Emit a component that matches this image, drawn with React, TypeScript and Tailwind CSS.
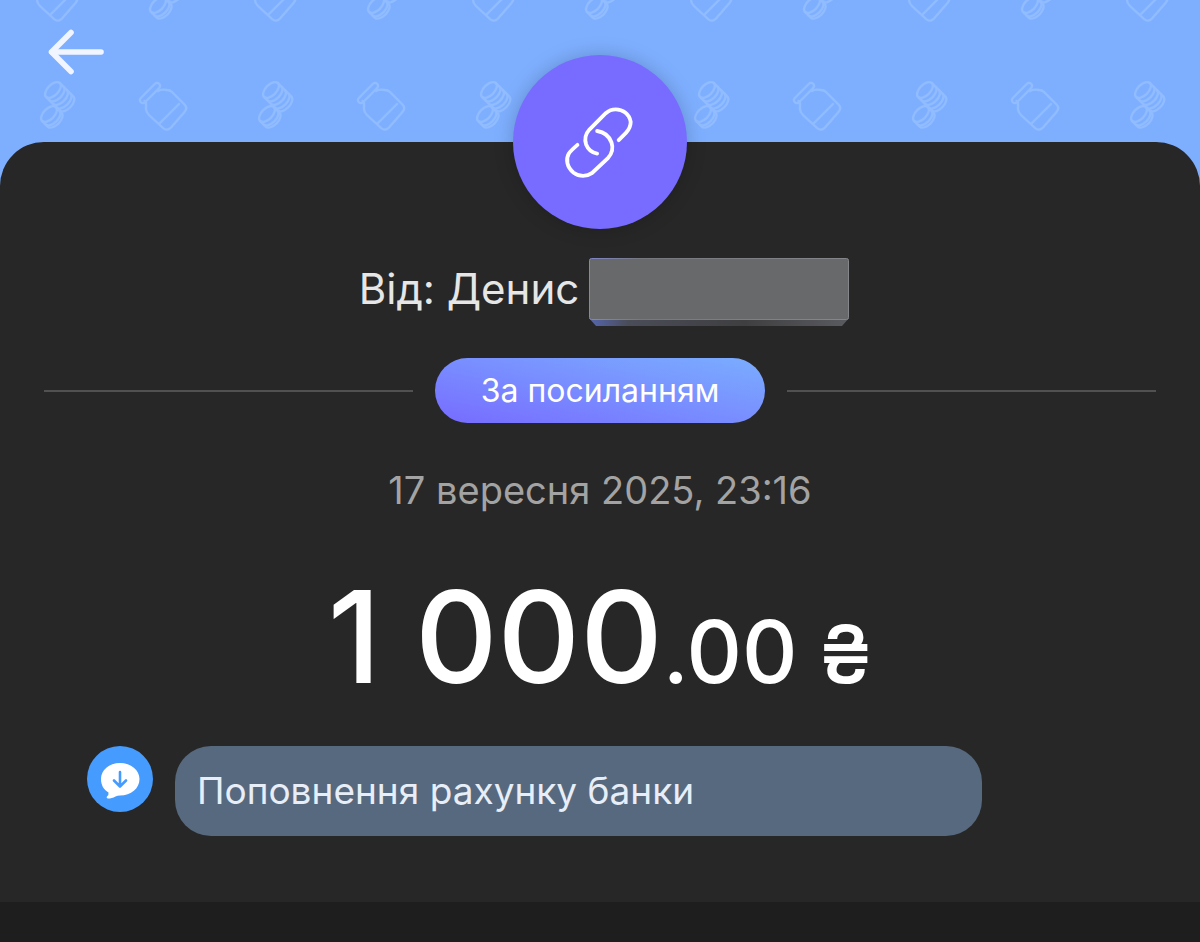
function CoinStack({ x, y, length }: { x: number; y: number; length: number }) {
  const ridges = [];
  for (let d = 5; d < length; d += 5) ridges.push(d);

  return (
    <g transform={`translate(${x} ${y}) rotate(45)`}>
      <ellipse cx="0" cy="0" rx="5.4" ry="9.8" />
      <path d={`M0 -9.8 H${length} A5.4 9.8 0 0 1 ${length} 9.8 H0`} />
      {ridges.map((d) => (
        <path key={d} d={`M${d} -9.8 A5.4 9.8 0 0 1 ${d} 9.8`} />
      ))}
    </g>
  );
}

function Coins() {
  return (
    <g>
      <CoinStack x={53} y={90} length={19} />
      <CoinStack x={49} y={114} length={8} />
    </g>
  );
}

function Jar() {
  return (
    <g>
      <rect x="-13" y="-3" width="26" height="6" rx="3" transform="translate(150 93) rotate(-45)" />
      <path d="M158 91 Q161 89 167 90 Q170 90 172 92 L184.500 104.500 Q188 108 184.500 112 L171 127.500 Q167 131.500 163 128 L149 115 Q146 112 146 109 V103 L144.500 101" />
      <path d="M179 104 L160 123" />
    </g>
  );
}

function HeaderPattern() {
  return (
    <svg className="absolute inset-x-0 top-0 h-[200px] w-full" aria-hidden="true">
      <defs>
        <pattern id="jars" width="218" height="218" patternUnits="userSpaceOnUse">
          <g fill="none" stroke="#91bcff" strokeWidth="2.300" strokeLinecap="round" strokeLinejoin="round">
            <Coins />
            <Jar />
            {/* odd rows are shifted by half a tile */}
            <g transform="translate(109 -109)">
              <Coins />
            </g>
            <g transform="translate(-109 -109)">
              <Jar />
            </g>
          </g>
        </pattern>
      </defs>
      <rect width="100%" height="100%" fill="url(#jars)" />
    </svg>
  );
}

function BackIcon() {
  return (
    <svg width="56" height="46" viewBox="0 0 56 46" fill="none" stroke="#f1f5ff" strokeWidth="5.600" strokeLinecap="round" strokeLinejoin="round">
      <path d="M23 3.500 L3.500 23 L23 42.500" />
      <path d="M4 23 H53" />
    </svg>
  );
}

function LinkIcon() {
  return (
    <svg width="70" height="71" viewBox="1 0 73 74" fill="none" stroke="#fff" strokeWidth="4" strokeLinecap="round" className="overflow-visible" aria-hidden="true">
      <path d="M57 34.500 L64.500 27 Q69.500 21.500 69.500 15.500 C68 7 61 2.500 54 2.500 Q48 2.500 43.500 6.500 L26.500 23.500 C22 28.500 21.500 34.500 23 39 C25 44 29 47.500 34.500 48.500" />
      <path d="M34.500 25 C41 26 47 30 49.500 37 C51.500 43 49.500 49 46 53 L29 69 C24 72.500 16 73 10 68.500 C3 63 1.500 54.500 5 48.500 Q6 46.500 14 39.500" />
    </svg>
  );
}

function TopUpIcon() {
  return (
    <svg width="66" height="66" viewBox="0 0 66 66" aria-hidden="true">
      <circle cx="33" cy="33" r="33" fill="#469bff" />
      <path d="M33 17 C44 17 52.500 24 52.500 33 C52.500 42.500 44 49.500 33 49.500 Q30.500 49.500 28.500 50.500 C26 52 23.500 52.500 21 52.500 Q19 52.300 20 50.500 Q22 48.500 21.500 46.500 C16.500 43.500 14 39 14 33 C14 24 22 17 33 17 Z" fill="#fff" />
      <path d="M33 26 V40 M27 34.500 L33 40.500 L39 34.500" fill="none" stroke="#469bff" strokeWidth="2.600" strokeLinecap="round" strokeLinejoin="round" />
    </svg>
  );
}

export default function App() {
  return (
    <div className="min-h-screen bg-[#1e1e1e] font-['Inter',sans-serif] text-white">
      <div className="relative bg-[#7eafff]">
        <HeaderPattern />

        <header className="relative h-[142px] px-12 pt-[29px]">
          <button type="button" aria-label="Назад" className="block">
            <BackIcon />
          </button>
        </header>

        <main className="relative flex flex-col rounded-t-[44px] bg-[#272727] pb-[66px]">
          <div className="-mt-[87px] flex size-[174px] items-center justify-center self-center rounded-full bg-[#776cff] shadow-[0_0_20px_rgba(0,0,0,0.2)]">
            <LinkIcon />
          </div>

          <div className="mt-[29px] flex justify-center gap-2.5 pl-2">
            <h1 className="text-[42px] leading-[62px] text-[#e6e6e6]">Від: Денис</h1>
            <svg width="260" height="68" viewBox="0 0 260 68" role="img" aria-label="Прізвище приховано">
              <defs>
                <linearGradient id="side" x1="0" x2="1" y1="0" y2="0">
                  <stop offset="0" stopColor="#5566b0" />
                  <stop offset="0.150" stopColor="#4a4c58" />
                  <stop offset="0.600" stopColor="#3f3f41" />
                  <stop offset="1" stopColor="#5a5b60" />
                </linearGradient>
                <linearGradient id="edge" x1="0" x2="1" y1="0" y2="0">
                  <stop offset="0" stopColor="#7f86c8" />
                  <stop offset="0.200" stopColor="#77787f" />
                  <stop offset="1" stopColor="#85868a" />
                </linearGradient>
              </defs>
              <path d="M0 60 L7 68 H253 L260 60 Z" fill="url(#side)" />
              <rect x="0.500" y="0.500" width="259" height="61" rx="2" fill="#68696b" stroke="url(#edge)" />
            </svg>
          </div>

          <div className="mt-8 flex items-center gap-[22px] px-11">
            <span className="h-0.5 flex-1 bg-[#515151]" />
            <span className="rounded-full bg-linear-to-tr from-[#776bff] to-[#7aadff] px-[46px] text-[32px] leading-[65px]">
              За посиланням
            </span>
            <span className="h-0.5 flex-1 bg-[#515151]" />
          </div>

          <time dateTime="2025-09-17T23:16" className="mt-[42px] text-center text-[38px] leading-[50px] text-[#a3a3a3]">
            17 вересня 2025, 23:16
          </time>

          <p className="mt-11 text-center text-[128px] leading-[156px] font-medium">
            1 000
            <span className="text-[86px]">.00</span>
            <span className="text-[80px]"> ₴</span>
          </p>

          <div className="mt-3.5 flex gap-[22px] pr-[218px] pl-[87px]">
            <TopUpIcon />
            <p className="flex-1 rounded-[36px] bg-[#57697f] px-[22px] text-[37px] leading-[90px] text-[#e8eef7]">
              Поповнення рахунку банки
            </p>
          </div>
        </main>
      </div>
    </div>
  );
}
